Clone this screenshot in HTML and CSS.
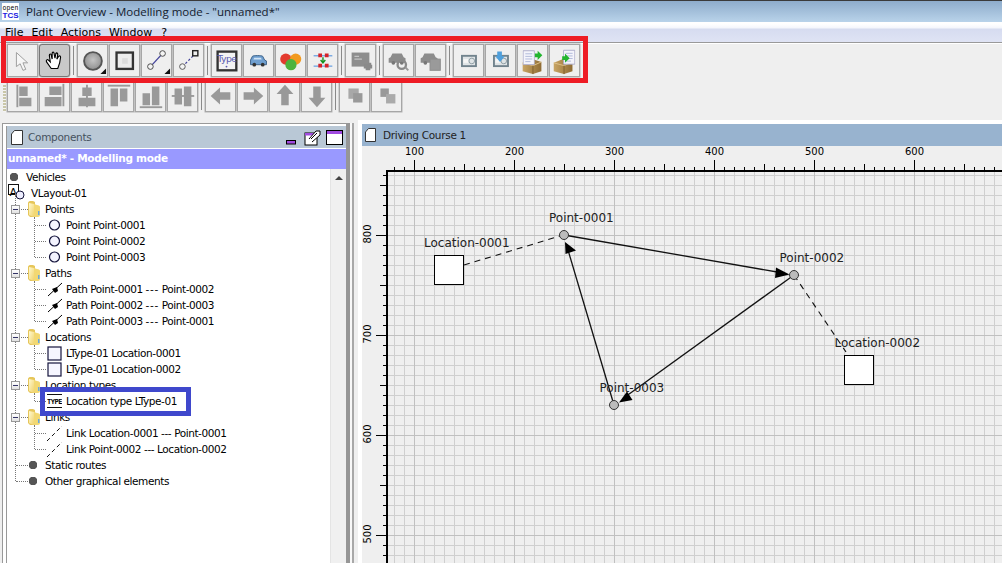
FILE: index.html
```html
<!DOCTYPE html>
<html lang="en">
<head>
    <meta charset="UTF-8">
    <title>Plant Overview - Modelling mode</title>
    <link rel="stylesheet" href="styles.css">
</head>
<body>
    <!-- shared icons, all toolbar ones are drawn on the 31x33 button box -->
    <svg class="defs" width="0" height="0">
        <defs>
            <radialGradient id="ball" cx="50%" cy="45%" r="55%"><stop offset="0" stop-color="#c4c4c4"/><stop offset="1" stop-color="#8f8f8f"/></radialGradient>
            <linearGradient id="foldergrad" x1="0" y1="0" x2="1" y2="1"><stop offset="0" stop-color="#fff9cf"/><stop offset="1" stop-color="#f0d26c"/></linearGradient>
            <linearGradient id="boxgrad" x1="0" y1="0" x2="1" y2="0"><stop offset="0" stop-color="#c9a564"/><stop offset="1" stop-color="#8f6c34"/></linearGradient>
            <symbol id="corner" viewBox="0 0 31 33"><path d="M30 25v6h-6z" fill="#111"/></symbol>
            <symbol id="graycar" viewBox="0 0 31 33"><path d="M7 13l2-4h10l2 4 2 1v5H5v-5z" fill="#8c8c8c"/><circle cx="10" cy="19" r="2" fill="#777"/><circle cx="19" cy="19" r="2" fill="#777"/></symbol>
            <symbol id="disk" viewBox="0 0 31 33"><rect x="8.500" y="11.500" width="15" height="11" fill="#dfe4e6" stroke="#71838d" stroke-width="2"/><circle cx="19" cy="17" r="3" fill="none" stroke="#8b9aa2"/><path d="M10 15h5v4h-5z" fill="#f5f5f5"/></symbol>
            <symbol id="crate" viewBox="0 0 31 33"><path d="M5 19l10-4 10 3v10l-9 3-11-3z" fill="url(#boxgrad)"/><path d="M5 19l11 3 9-4" fill="none" stroke="#e0c48c"/><path d="M16 22v9" stroke="#7d5d2c"/></symbol>
            <symbol id="doc" viewBox="0 0 14 17"><path d="M.5.5h13v16H.5z" fill="#f4f4fb" stroke="#a6a6c6"/><path d="M3 4h8M3 7h8M3 10h8M3 13h6" stroke="#a9b3d6"/></symbol>
            <symbol id="bullet" viewBox="0 0 10 10"><path d="M3 1h4l2 2v4L7 9H3L1 7V3z" fill="#555"/></symbol>
            <symbol id="folder" viewBox="0 0 14 16"><path d="M1 2c0-1 1-2 2-2h3l2 1v15H3l-2-2z" fill="#e6c65a"/><path d="M2 2l5 1v13l-5-2z" fill="url(#foldergrad)"/><path d="M7 3l3 1c2 0 3 1 3 2v8c0 1-1 2-2 2H7z" fill="#f2d873"/><path d="M11 10h1.500v4H11z" fill="#68a8e0"/></symbol>
            <symbol id="node" viewBox="0 0 15 16"><circle cx="7.500" cy="8" r="5" fill="#f4f4ff" stroke="#14143c" stroke-width="1.200"/></symbol>
            <symbol id="path" viewBox="0 0 15 16"><path d="M1 15L15 2" stroke="#000"/><path d="M5 8l5-2 1 4-3 2z" fill="#000"/></symbol>
            <symbol id="loc" viewBox="0 0 15 16"><rect x="1" y="2" width="13" height="13" fill="#f6f6ff" stroke="#14143c" stroke-width="1.200"/></symbol>
            <symbol id="link" viewBox="0 0 15 16"><path d="M0 16L15 1" stroke="#111" stroke-dasharray="4 3"/></symbol>
        </defs>
    </svg>

    <header class="titlebar">
        <svg class="app-logo" width="17" height="17" viewBox="0 0 17 17">
            <rect width="17" height="17" fill="#fff"/>
            <text x=".5" y="6.500" class="logo-open">open</text>
            <text x=".5" y="15" class="logo-tcs">TCS</text>
        </svg>
        <span class="title-text">Plant Overview - Modelling mode - "unnamed*"</span>
    </header>

    <nav class="menubar">
        <span>File</span><span>Edit</span><span>Actions</span><span>Window</span><span class="help">?</span>
    </nav>

    <section class="toolbars">
        <div class="toolrow">
            <button class="tool"><svg viewBox="0 0 31 33"><path d="M9 8v15l4-3 3 7 3-1-3-7h5z" fill="#f6f6f6" stroke="#9a9a9a"/></svg></button>
            <button class="tool active"><svg viewBox="0 0 31 33"><path d="M12 25l-5-7c-1-2 1-3 2-2l2 2-1-7c0-2 2-2 2 0l1 4V9c0-2 2-2 2 0l1 5 1-5c0-1 2-1 2 1l-1 5 2-3c1-1 2 0 2 1l-1 6-2 6z" fill="#fff" stroke="#000" stroke-width="1.200"/></svg></button>
            <i class="sep"></i>
            <button class="tool"><svg viewBox="0 0 31 33"><circle cx="16" cy="17" r="9.500" fill="url(#ball)" stroke="#555" stroke-width="2"/><use href="#corner"/></svg></button>
            <button class="tool"><svg viewBox="0 0 31 33"><rect x="7" y="8" width="17.500" height="17.500" fill="#ececec" stroke="#333" stroke-width="2.500"/><rect x="13" y="14" width="6" height="6" fill="#dcdcdc"/></svg></button>
            <button class="tool"><svg viewBox="0 0 31 33"><path d="M9 23L22 9" stroke="#44449a" stroke-width="1.300"/><circle cx="9" cy="23" r="3" fill="#f4f4f4" stroke="#444"/><circle cx="22" cy="9" r="3" fill="#f4f4f4" stroke="#444"/><use href="#corner"/></svg></button>
            <button class="tool"><svg viewBox="0 0 31 33"><path d="M9 23L22 10" stroke="#44449a" stroke-width="1.300" stroke-dasharray="2.500 2"/><circle cx="9" cy="23" r="3" fill="#f4f4f4" stroke="#555"/><rect x="20" y="6" width="5.500" height="5.500" fill="#eee" stroke="#222" stroke-width="1.500"/></svg></button>
            <i class="sep"></i>
            <button class="tool"><svg viewBox="0 0 31 33"><rect x="6" y="7" width="20" height="20" fill="#f3f3f3" stroke="#333" stroke-width="2.500"/><text x="16" y="18.500" class="type-label">Type</text><circle cx="15.500" cy="23" r="1" fill="#5a5ab0"/></svg></button>
            <button class="tool"><svg viewBox="0 0 31 33"><path d="M7 16l2-4c1-1 10-1 11 0l2 4 2 1v4H7z" fill="#6f9fd0" stroke="#3b5f85"/><path d="M10 15.500l1-2h7l1 2z" fill="#cfe3f5"/><circle cx="11" cy="21" r="2" fill="#333"/><circle cx="20" cy="21" r="2" fill="#333"/></svg></button>
            <button class="tool"><svg viewBox="0 0 31 33"><circle cx="10.500" cy="15" r="6" fill="#e33b2e"/><circle cx="21" cy="15" r="6" fill="#f29a1f"/><circle cx="16" cy="21" r="6" fill="#4db33d"/></svg></button>
            <button class="tool"><svg viewBox="0 0 31 33"><path d="M6 11.500h20M6 22.500h20" stroke="#3c86dc"/><path d="M11 9h4v4h-4zM18 9h4v4h-4zM11 20h4v4h-4zM18 20h4v4h-4z" fill="#d4232a"/><path d="M16 13v5M13.500 16l2.500 3 2.500-3" fill="none" stroke="#14921e" stroke-width="1.500"/></svg></button>
            <i class="sep"></i>
            <button class="tool"><svg viewBox="0 0 31 33"><rect x="6" y="8" width="19" height="15" fill="#8d8d8d"/><path d="M9 12h5M9 15h8" stroke="#d6d6d6"/><path d="M20 20h4v-1h3v2h1v4h-2v2h-5v-2h-2v-4z" fill="#8a8a8a"/></svg></button>
            <i class="sep"></i>
            <button class="tool"><svg viewBox="0 0 31 33"><use href="#graycar"/><circle cx="19" cy="21" r="4.500" fill="none" stroke="#8a8a8a" stroke-width="2.500"/><path d="M23 24l3 3" stroke="#999" stroke-width="2"/></svg></button>
            <button class="tool"><svg viewBox="0 0 31 33"><use href="#graycar"/><rect x="15" y="15" width="11" height="12" fill="#9a9a9a" stroke="#8c8c8c"/></svg></button>
            <i class="sep"></i>
            <button class="tool"><svg viewBox="0 0 31 33"><use href="#disk"/></svg></button>
            <button class="tool"><svg viewBox="0 0 31 33"><use href="#disk"/><path d="M12 7h5v5h3l-5 6-5-6h2z" fill="#4e9fdc"/></svg></button>
            <button class="tool"><svg viewBox="0 0 31 33"><use href="#crate" /><use href="#doc" x="5" y="5" width="13" height="17"/><path d="M18 9h3V6l5 5-5 5v-3h-3z" fill="#22b52e"/></svg></button>
            <button class="tool"><svg viewBox="0 0 31 33"><use href="#crate" x="-1"/><use href="#doc" x="14" y="4" width="13" height="18"/><path d="M13 12h3V9l5 5-5 5v-3h-3z" fill="#22b52e"/></svg></button>
        </div>
        <div class="toolrow second">
            <i class="grip"></i>
            <button class="tool"><svg viewBox="0 0 31 33"><path d="M10 5v24" stroke="#999" stroke-width="2"/><path d="M12 7h9v10h-9zM12 19h13v9H12z" fill="#999"/></svg></button>
            <button class="tool"><svg viewBox="0 0 31 33"><path d="M25 4v24" stroke="#999" stroke-width="2"/><path d="M10 7h13v9H10zM5 18h18v10H5z" fill="#999"/></svg></button>
            <button class="tool"><svg viewBox="0 0 31 33"><path d="M16 5v24" stroke="#999" stroke-width="2"/><path d="M11 8h10v9H11zM7 19h18v9H7z" fill="#999"/></svg></button>
            <button class="tool"><svg viewBox="0 0 31 33"><path d="M4 6h24" stroke="#999" stroke-width="2"/><path d="M7 9h8v19H7zM17 9h8v14h-8z" fill="#999"/></svg></button>
            <button class="tool"><svg viewBox="0 0 31 33"><path d="M4 29h24" stroke="#999" stroke-width="2"/><path d="M7 14h8v13H7zM17 7h8v20h-8z" fill="#999"/></svg></button>
            <button class="tool"><svg viewBox="0 0 31 33"><path d="M4 17h24" stroke="#999" stroke-width="2"/><path d="M7 9h8v17H7zM17 7h8v21h-8z" fill="#999"/></svg></button>
            <i class="sep"></i>
            <button class="tool"><svg viewBox="0 0 31 33"><path d="M5 17l10-9v5h11v8H15v5z" fill="#999"/></svg></button>
            <button class="tool"><svg viewBox="0 0 31 33"><path d="M27 17l-10-9v5H6v8h11v5z" fill="#999"/></svg></button>
            <button class="tool"><svg viewBox="0 0 31 33"><path d="M16 5l9 10h-5v12h-8V15H7z" fill="#999"/></svg></button>
            <button class="tool"><svg viewBox="0 0 31 33"><path d="M16 29l9-10h-5V7h-8v12H7z" fill="#999"/></svg></button>
            <i class="sep"></i>
            <button class="tool"><svg viewBox="0 0 31 33"><path d="M9 9h11v11H9z" fill="#a8a8a8"/><path d="M14 14h10v10H14z" fill="#999"/></svg></button>
            <button class="tool"><svg viewBox="0 0 31 33"><path d="M9 9h9v9H9z" fill="#999"/><path d="M15 15h10v10H15z" fill="#aaa"/></svg></button>
        </div>
    </section>

    <main class="workspace">
        <aside class="left-pane">
            <div class="panel">
                <div class="panel-head">
                    <svg class="page-icon" width="12" height="15" viewBox="0 0 12 15"><path d="M3.500.5h8v14H.5V4z" fill="#fff" stroke="#333"/></svg>
                    <span class="panel-title">Components</span>
                    <svg class="win-btn min" width="11" height="6" viewBox="0 0 11 6"><rect x=".5" y="1.500" width="9" height="3.500" fill="#a14be0" stroke="#000"/></svg>
                    <svg class="win-btn" width="17" height="17" viewBox="0 0 17 17"><rect x="1" y="4" width="12" height="12" fill="#fff" stroke="#000"/><path d="M1 4h12v2.500H1z" fill="#a14be0"/><path d="M5 10l7-8h4v4l-8 7" fill="#fff" stroke="#000"/><path d="M7 10l6-6" stroke="#000"/></svg>
                    <svg class="win-btn" width="17" height="15" viewBox="0 0 17 15"><rect x=".5" y=".5" width="16" height="14" fill="#fff" stroke="#000"/><path d="M1 1h15v3H1z" fill="#a14be0"/></svg>
                </div>
                <div class="panel-sub">unnamed* - Modelling mode</div>
                <div class="tree-wrap">
                    <div class="tree">
                        <div class="row top"><svg class="ico-bullet"><use href="#bullet"/></svg>Vehicles</div>
                        <div class="row layout"><svg class="ico-layout" viewBox="0 0 18 18"><rect x=".5" y=".5" width="10" height="10" fill="#fff" stroke="#111"/><text x="1.500" y="12" class="layout-a">A</text><circle cx="12" cy="11" r="4" fill="#eef" stroke="#14143c"/></svg>VLayout-01</div>
                        <div class="branches">
                            <div class="group">
                                <div class="row branch"><i class="toggle"></i><svg class="ico-folder"><use href="#folder"/></svg>Points</div>
                                <div class="children">
                                    <div class="row leaf"><svg class="ico-leaf"><use href="#node"/></svg>Point Point-0001</div>
                                    <div class="row leaf"><svg class="ico-leaf"><use href="#node"/></svg>Point Point-0002</div>
                                    <div class="row leaf"><svg class="ico-leaf"><use href="#node"/></svg>Point Point-0003</div>
                                </div>
                            </div>
                            <div class="group">
                                <div class="row branch"><i class="toggle"></i><svg class="ico-folder"><use href="#folder"/></svg>Paths</div>
                                <div class="children">
                                    <div class="row leaf"><svg class="ico-leaf"><use href="#path"/></svg><span>Path Point-0001 <b class="dashes">---</b> Point-0002</span></div>
                                    <div class="row leaf"><svg class="ico-leaf"><use href="#path"/></svg><span>Path Point-0002 <b class="dashes">---</b> Point-0003</span></div>
                                    <div class="row leaf"><svg class="ico-leaf"><use href="#path"/></svg><span>Path Point-0003 <b class="dashes">---</b> Point-0001</span></div>
                                </div>
                            </div>
                            <div class="group">
                                <div class="row branch"><i class="toggle"></i><svg class="ico-folder"><use href="#folder"/></svg>Locations</div>
                                <div class="children">
                                    <div class="row leaf"><svg class="ico-leaf"><use href="#loc"/></svg>LType-01 Location-0001</div>
                                    <div class="row leaf"><svg class="ico-leaf"><use href="#loc"/></svg>LType-01 Location-0002</div>
                                </div>
                            </div>
                            <div class="group">
                                <div class="row branch"><i class="toggle"></i><svg class="ico-folder"><use href="#folder"/></svg>Location types</div>
                                <div class="children">
                                    <div class="row leaf"><svg class="ico-leaf" viewBox="0 0 15 16"><path d="M0 1.500h15M0 14.500h15" stroke="#111"/><text x="0" y="11" class="type-tag">TYPE</text></svg>Location type LType-01</div>
                                </div>
                            </div>
                            <div class="group">
                                <div class="row branch"><i class="toggle"></i><svg class="ico-folder"><use href="#folder"/></svg>Links</div>
                                <div class="children">
                                    <div class="row leaf"><svg class="ico-leaf"><use href="#link"/></svg>Link Location-0001 --- Point-0001</div>
                                    <div class="row leaf"><svg class="ico-leaf"><use href="#link"/></svg>Link Point-0002 --- Location-0002</div>
                                </div>
                            </div>
                            <div class="row branch plain"><svg class="ico-bullet"><use href="#bullet"/></svg>Static routes</div>
                            <div class="row branch plain"><svg class="ico-bullet"><use href="#bullet"/></svg>Other graphical elements</div>
                        </div>
                    </div>
                    <div class="scrollbar"><i class="arrow-up"></i></div>
                </div>
            </div>
        </aside>

        <section class="right-pane">
            <div class="course-head">
                <svg class="page-icon" width="11" height="14" viewBox="0 0 11 14"><path d="M3.500.5h7v13H.5V4z" fill="#fff" stroke="#333"/></svg>
                <span>Driving Course 1</span>
            </div>
            <svg class="course" width="640" height="417" viewBox="362 146 640 417">
                <defs>
                    <pattern id="minor" x="4" y="5" width="10" height="10" patternUnits="userSpaceOnUse">
                        <path d="M.5 0v10M0 .5h10" stroke="#cfcfcf" fill="none"/>
                    </pattern>
                    <pattern id="major" x="14" y="35" width="100" height="100" patternUnits="userSpaceOnUse">
                        <path d="M.5 0v100M0 .5h100" stroke="#c0c0c0" fill="none"/>
                    </pattern>
                </defs>

                <!-- grid -->
                <rect x="387" y="171" width="615" height="392" fill="url(#minor)"/>
                <rect x="387" y="171" width="615" height="392" fill="url(#major)"/>

                <!-- ruler ticks -->
                <g class="ticks">
                    <path d="M394 168.500H1002" stroke-width="3" stroke-dasharray="1 9"/>
                    <path d="M414 167H1002" stroke-width="6" stroke-dasharray="1 49"/>
                    <path d="M414 165H1002" stroke-width="10" stroke-dasharray="1 99"/>
                    <path d="M384.500 175V563" stroke-width="3" stroke-dasharray="1 9"/>
                    <path d="M383 185V563" stroke-width="6" stroke-dasharray="1 49"/>
                    <path d="M381 235V563" stroke-width="10" stroke-dasharray="1 99"/>
                </g>
                <path d="M387 563V171H1002" fill="none" stroke="#000" stroke-width="2"/>

                <!-- ruler labels -->
                <g class="ruler-x">
                    <text x="414.500" y="155">100</text>
                    <text x="514.500" y="155">200</text>
                    <text x="614.500" y="155">300</text>
                    <text x="714.500" y="155">400</text>
                    <text x="814.500" y="155">500</text>
                    <text x="914.500" y="155">600</text>
                </g>
                <g class="ruler-y">
                    <text transform="translate(371 234) rotate(-90)">800</text>
                    <text transform="translate(371 334) rotate(-90)">700</text>
                    <text transform="translate(371 434) rotate(-90)">600</text>
                    <text transform="translate(371 534) rotate(-90)">500</text>
                </g>

                <!-- links -->
                <path class="link" d="M464 265L560 236"/>
                <path class="link" d="M794 275L846 352"/>

                <!-- paths -->
                <path class="edge" d="M564 235L780 272.500"/>
                <path class="edge" d="M794 275L625 397"/>
                <path class="edge" d="M614 405L568 250"/>
                <path d="M789.500 274.500L776 267.500L775 278Z"/>
                <path d="M619 402.500L627 391.500L632.500 400Z"/>
                <path d="M565 242L565.500 254L576 250.500Z"/>

                <!-- locations and points -->
                <rect class="location" x="434.500" y="255.500" width="29" height="29"/>
                <rect class="location" x="844.500" y="355.500" width="29" height="29"/>
                <circle class="point" cx="564" cy="235" r="4.500"/>
                <circle class="point" cx="794" cy="275" r="4.500"/>
                <circle class="point" cx="614" cy="405" r="4.500"/>

                <g class="fig-label">
                    <text x="549" y="222">Point-0001</text>
                    <text x="779.500" y="262">Point-0002</text>
                    <text x="599.500" y="392">Point-0003</text>
                    <text x="424" y="247">Location-0001</text>
                    <text x="834.500" y="347">Location-0002</text>
                </g>
            </svg>
        </section>
    </main>

    <!-- red and blue marks drawn over the screenshot -->
    <div class="mark-red"></div>
    <div class="mark-blue"></div>
</body>
</html>
```

FILE: styles.css
```css
* {
    box-sizing: border-box;
}
html, body {
    margin: 0;
    height: 100%;
}
body {
    position: relative;
    width: 1002px;
    height: 563px;
    overflow: hidden;
    background-color: #efefef;
    font-family: "DejaVu Sans", sans-serif;
    color: #000;
}
.defs {
    position: absolute;
}

/* title + menu */
.titlebar {
    height: 22px;
    border-top: 1px solid #3a3a3a;
    background: linear-gradient(#8eaccb, #b9d3ea);
    display: flex;
    align-items: center;
    padding-left: 2px;
}
.app-logo {
    margin-right: 7px;
}
.logo-open {
    font: 6.500px "Liberation Mono", monospace;
    letter-spacing: .1px;
    fill: #000;
}
.logo-tcs {
    font: bold 8px "Liberation Sans", sans-serif;
    fill: #1a1ae0;
}
.title-text {
    font-family: "Open Sans", sans-serif;
    font-size: 11.500px;
    color: #14202e;
}
.menubar {
    height: 21px;
    padding: 4px 0 0 5px;
    border-bottom: 1px solid #999;
    background: linear-gradient(#fff 10%, #f4f6fc 30%, #d6dcf0 35%, #dfe3f4);
    display: flex;
    align-items: flex-start;
    gap: 8px;
    font-size: 11px;
    line-height: 14px;
}
.help {
    margin-left: 1px;
}

/* toolbars */
.toolbars {
    height: 77px;
    border-top: 1px solid #fff;
}
.toolrow {
    display: flex;
    height: 33px;
    padding-left: 7px;
}
.toolrow.second {
    margin-top: 2px;
    padding-left: 3px;
}
.tool {
    width: 31px;
    height: 33px;
    margin: 0 1px 0 0;
    padding: 0;
    border: 1px solid #a6a6a6;
    box-shadow: 0 0 0 .5px #b4b4b4;
    background-color: #efefef;
}
.tool svg {
    display: block;
    width: 29px;
    height: 31px;
}
.tool.active {
    border: 1px solid #777;
    border-radius: 3px;
    background-color: #c9c9c9;
}
.sep {
    width: 1px;
    margin: 2px 3px 2px 2px;
    background-color: #8a8a8a;
}
.grip {
    width: 3px;
    margin: 6px 1px 0 0;
    background: repeating-linear-gradient(#c9c6a8 0 2px, #f4f4f4 2px 3px);
}

/* main split */
.workspace {
    display: flex;
    height: 443px;
}
.left-pane {
    width: 348px;
    margin: 3px 0 0 2px;
    padding: 2px 0 0 3px;
    border-top: 1px solid #999;
    border-left: 1px solid #999;
    border-right: 4px solid #969696;
    background-color: #fff;
}
.panel {
    height: 100%;
    border-left: 1px solid #999;
    display: flex;
    flex-direction: column;
}
.panel-head {
    height: 22px;
    background-color: #b9c8d6;
    display: flex;
    align-items: center;
    padding: 0 3px 0 4px;
    flex-shrink: 0;
}
.panel-title {
    margin-left: 5px;
    font-size: 10.500px;
    letter-spacing: -.3px;
    color: #46525e;
    flex-grow: 1;
}
.win-btn {
    margin-left: 5px;
}
.win-btn.min {
    align-self: flex-end;
    margin: 0 2px 3px 0;
}
.panel-sub {
    height: 20px;
    margin-top: 1px;
    padding-left: 1px;
    background-color: #9999ff;
    color: #fff;
    font-size: 10.500px;
    font-weight: bold;
    line-height: 19px;
    letter-spacing: -.28px;
    flex-shrink: 0;
}
.tree-wrap {
    flex-grow: 1;
    display: flex;
    min-height: 0;
}
.tree {
    width: 323px;
    font-size: 10.500px;
    letter-spacing: -.42px;
}
.scrollbar {
    width: 16px;
    background-color: #f0f0f0;
    border-left: 1px solid #e4e4e4;
    display: flex;
    justify-content: center;
    padding-top: 7px;
}
.arrow-up {
    width: 0;
    height: 0;
    border: 4px solid transparent;
    border-top: 0;
    border-bottom: 4px solid #444;
}

/* tree rows */
.row {
    height: 16px;
    display: flex;
    align-items: center;
    white-space: nowrap;
    position: relative;
}
.row svg {
    flex-shrink: 0;
}
.dashes {
    font-weight: normal;
    letter-spacing: .6px;
}
.row.top {
    padding-left: 2px;
}
.ico-bullet {
    width: 10px;
    height: 10px;
    margin-right: 7px;
}
.ico-layout {
    width: 18px;
    height: 18px;
    margin: 0 5px 0 1px;
}
.layout-a {
    font-size: 11px;
    letter-spacing: 0;
}
.branches {
    position: relative;
}
.branches::before {
    content: "";
    position: absolute;
    left: 8px;
    top: -8px;
    bottom: 8px;
    border-left: 1px dotted #777;
}
.branch {
    padding-left: 4px;
}
.branch::before {
    content: "";
    position: absolute;
    left: 9px;
    width: 12px;
    top: 8px;
    border-top: 1px dotted #777;
}
.toggle {
    position: relative;
    width: 9px;
    height: 9px;
    margin-right: 7px;
    border: 1px solid #999;
    background: linear-gradient(#fff, #e2e2e2);
}
.toggle::after {
    content: "";
    position: absolute;
    left: 1px;
    right: 1px;
    top: 3px;
    height: 1px;
    background-color: #336;
}
.ico-folder {
    position: relative;
    width: 14px;
    height: 16px;
    margin-right: 4px;
}
.branch.plain {
    padding-left: 21px;
}
.branch.plain .ico-bullet {
    position: relative;
}
.children {
    position: relative;
}
.children::before {
    content: "";
    position: absolute;
    left: 27px;
    top: 0;
    bottom: 8px;
    border-left: 1px dotted #777;
}
.leaf {
    padding-left: 40px;
}
.leaf::before {
    content: "";
    position: absolute;
    left: 28px;
    width: 11px;
    top: 8px;
    border-top: 1px dotted #777;
}
.ico-leaf {
    width: 15px;
    height: 16px;
    margin-right: 4px;
}
.type-tag {
    font: bold 7px "DejaVu Sans Mono", monospace;
    letter-spacing: -.5px;
}
.type-label {
    font: 10px "DejaVu Sans", sans-serif;
    letter-spacing: -.6px;
    fill: #5a5ab0;
    text-anchor: middle;
}

/* drawing pane */
.right-pane {
    position: relative;
    flex-grow: 1;
    margin-left: 8px;
    padding: 4px 0 0 4px;
    background-color: #fff;
    min-width: 0;
}
.right-pane::before {
    content: "";
    position: absolute;
    left: -6px;
    top: 3px;
    bottom: 0;
    width: 2px;
    background-color: #a8a8a8;
    box-shadow: -2px 0 0 #f8f8f8;
}
.course-head {
    height: 22px;
    padding-left: 3px;
    background-color: #98b3cf;
    display: flex;
    align-items: center;
    gap: 7px;
    font-size: 10.500px;
    letter-spacing: -.3px;
    color: #222;
}
.course {
    display: block;
    background-color: #efefef;
}
.ticks path {
    fill: none;
    stroke: #000;
}
.ruler-x text, .ruler-y text {
    font-size: 10px;
    text-anchor: middle;
    fill: #000;
}
.fig-label text {
    font-size: 12px;
    fill: #222;
}
.link {
    fill: none;
    stroke: #111;
    stroke-width: 1.100;
    stroke-dasharray: 6 5;
}
.edge {
    fill: none;
    stroke: #111;
    stroke-width: 1.300;
}
.location {
    fill: #fff;
    stroke: #000;
}
.point {
    fill: #bbb;
    stroke: #333;
}

/* marks */
.mark-red {
    position: absolute;
    left: 1px;
    top: 36px;
    width: 587px;
    height: 47px;
    border: 5px solid #ee1c25;
}
.mark-blue {
    position: absolute;
    left: 40px;
    top: 387px;
    width: 151px;
    height: 29px;
    border: 5px solid #3f48cc;
}
```
